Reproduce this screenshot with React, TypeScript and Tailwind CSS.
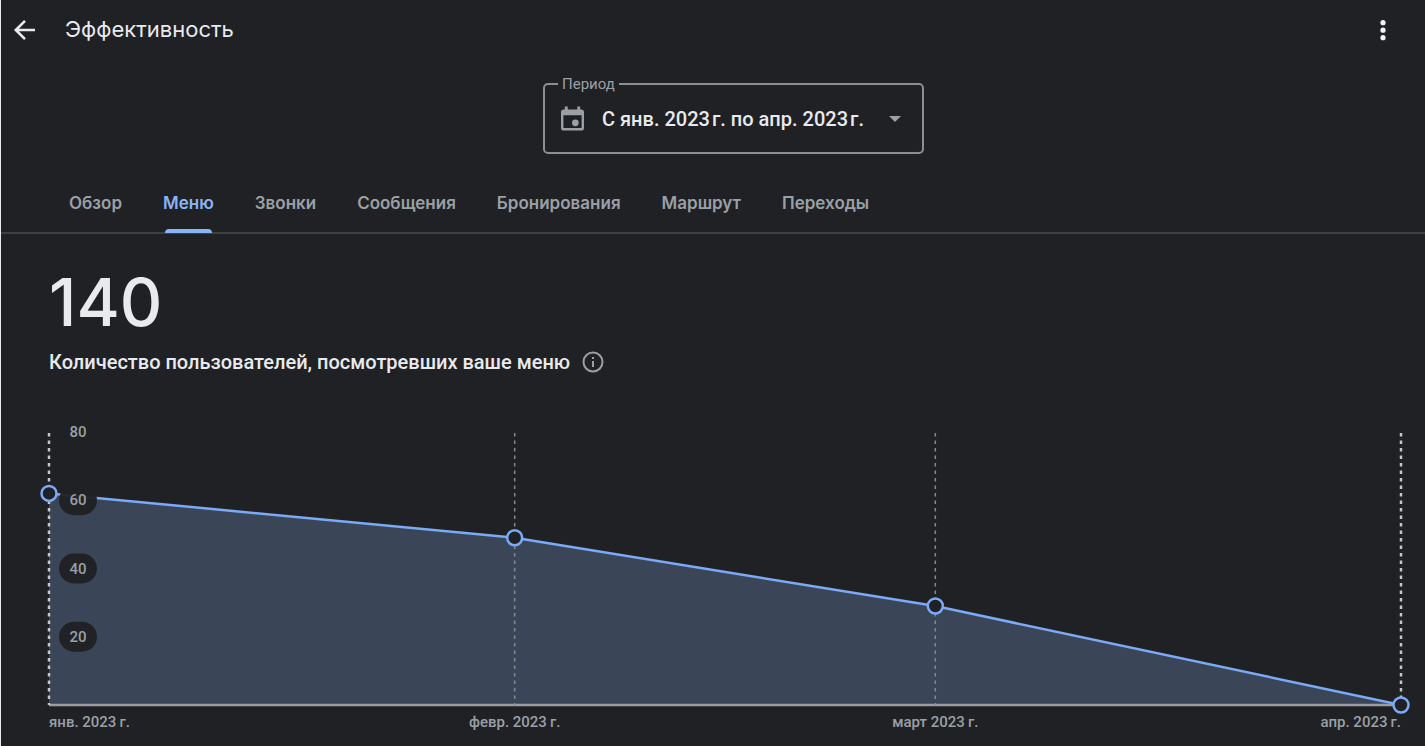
import { useState } from 'react'

type Point = { day: number; value: number; label: string; anchor: 'start' | 'middle' | 'end' }

const TABS = ['Обзор', 'Меню', 'Звонки', 'Сообщения', 'Бронирования', 'Маршрут', 'Переходы']

const PERIODS = ['С янв. 2023\u200Aг. по апр. 2023\u200Aг.']

const POINTS: Point[] = [
  { day: 0, value: 62, label: 'янв. 2023\u2009г.', anchor: 'start' },
  { day: 31, value: 49, label: 'февр. 2023\u2009г.', anchor: 'middle' },
  { day: 59, value: 29, label: 'март 2023\u2009г.', anchor: 'middle' },
  { day: 90, value: 0, label: 'апр. 2023\u2009г.', anchor: 'end' },
]

const TICKS = [80, 60, 40, 20]
const DAYS = 90
const MAX = 80
const PLOT_H = 273

const xOf = (day: number) => `${(day / DAYS) * 100}%`
const yOf = (value: number) => PLOT_H - (value / MAX) * PLOT_H

function Chart() {
  const line = POINTS.map((p) => `${p.day},${yOf(p.value)}`).join(' ')

  return (
    <svg
      role="img"
      aria-label="Количество пользователей по месяцам"
      className="block w-full h-[300px] overflow-visible font-['Roboto',sans-serif]"
    >
      {/* area + line stretch with the window */}
      <svg
        width="100%"
        height={PLOT_H}
        viewBox={`0 0 ${DAYS} ${PLOT_H}`}
        preserveAspectRatio="none"
        className="overflow-visible"
      >
        <polygon points={`0,${PLOT_H} ${line}`} fill="#3b4558" />
        <polyline
          points={line}
          fill="none"
          stroke="#7baaf7"
          strokeWidth="2.5"
          vectorEffect="non-scaling-stroke"
        />
      </svg>

      <line x1="0" x2="100%" y1={PLOT_H} y2={PLOT_H} stroke="#9a9da3" strokeWidth="2.5" />

      {POINTS.map((p) => {
        const edge = p.anchor !== 'middle'
        return (
          <line
            key={p.day}
            x1={xOf(p.day)}
            x2={xOf(p.day)}
            y1="1"
            y2={PLOT_H}
            stroke={edge ? '#c4c7ca' : '#84898f'}
            strokeWidth={edge ? 2.5 : 1.5}
            strokeDasharray="3.5 4"
          />
        )
      })}

      {TICKS.map((t) => (
        <g key={t}>
          <rect x="10" y={yOf(t) - 15} width="38" height="30" rx="15" fill="#202124" fillOpacity="0.96" />
          <text x="29" y={yOf(t) + 5} textAnchor="middle" className="fill-[#9aa0a6] text-[15px] font-medium">
            {t}
          </text>
        </g>
      ))}

      {POINTS.map((p) => (
        <g key={p.day}>
          <circle cx={xOf(p.day)} cy={yOf(p.value)} r="7.5" fill="#202124" stroke="#7baaf7" strokeWidth="2.5" />
          <text
            x={xOf(p.day)}
            y={PLOT_H + 22}
            textAnchor={p.anchor}
            className="fill-[#9aa0a6] text-[15px] font-medium"
          >
            {p.label}
          </text>
        </g>
      ))}
    </svg>
  )
}

export default function App() {
  const [tab, setTab] = useState('Меню')

  return (
    <div className="min-h-screen bg-[#202124] border-l border-[#e8eaed] text-[#e8eaed] font-['Roboto',sans-serif]">
      {/* Header */}
      <header className="flex items-center h-[60px] pl-3 pr-[30px]">
        <button type="button" aria-label="Назад" className="shrink-0">
          <svg width="24" height="24" viewBox="0 0 24 24" fill="none" stroke="currentColor" strokeWidth="2.6">
            <path d="M22 12H3.5M12 2.8 2.8 12l9.2 9.2" />
          </svg>
        </button>
        <h1 className="ml-7 pb-0.5 text-[22px] leading-7 font-['Inter',sans-serif]">Эффективность</h1>
        <button type="button" aria-label="Ещё" className="ml-auto">
          <svg width="24" height="24" viewBox="0 0 24 24" fill="#f1f3f4">
            <circle cx="12" cy="4.7" r="2.6" />
            <circle cx="12" cy="12.2" r="2.6" />
            <circle cx="12" cy="19.7" r="2.6" />
          </svg>
        </button>
      </header>

      {/* Period */}
      <div className="flex justify-center pt-[14px] pl-[41px]">
        <fieldset className="w-[381px] h-20 px-3 border-2 border-[#8b8f94] rounded-[5px]">
          <legend className="ml-px px-1 text-[15px] leading-5 text-[#9aa0a6]">
            <label htmlFor="period">Период</label>
          </legend>
          <div className="flex items-center h-[50px] pl-1">
            <svg width="23" height="26" viewBox="0 0 24 26" fill="#9aa0a6" className="shrink-0">
              <path
                fillRule="evenodd"
                d="M4 0h3v3h10V0h3v3h1a3 3 0 0 1 3 3v16a3 3 0 0 1-3 3H3a3 3 0 0 1-3-3V6a3 3 0 0 1 3-3h1zM2.500 9v12.500a1 1 0 0 0 1 1h17a1 1 0 0 0 1-1V9z"
              />
              <circle cx="15" cy="17" r="3.500" />
            </svg>
            <select
              id="period"
              className="grow min-w-0 ml-[18px] appearance-none bg-transparent text-xl leading-6 font-medium outline-none"
            >
              {PERIODS.map((p) => (
                <option key={p}>{p}</option>
              ))}
            </select>
            <svg width="12" height="6" viewBox="0 0 12 6" fill="#9aa0a6" className="shrink-0 mr-[9px]">
              <path d="M0 0h12L6 6z" />
            </svg>
          </div>
        </fieldset>
      </div>

      {/* Tabs */}
      <div role="tablist" className="flex gap-[41px] mt-5 pl-[68px] border-b-2 border-[#3c4043]">
        {TABS.map((t) => {
          const active = t === tab
          return (
            <button
              key={t}
              type="button"
              role="tab"
              aria-selected={active}
              onClick={() => setTab(t)}
              className={`relative h-[58px] text-[17px] leading-6 font-semibold font-['Inter',sans-serif] ${
                active ? 'text-[#8ab4f8]' : 'text-[#9aa0a6]'
              }`}
            >
              {t}
              {active && <span className="absolute inset-x-[2px] -bottom-px h-1 rounded-t-sm bg-[#8ab4f8]" />}
            </button>
          )
        })}
      </div>

      {/* Metric */}
      <main className="pl-12 pr-6">
        <p className="pt-[34px] text-[66px] leading-[68px] font-medium font-['Inter',sans-serif]">140</p>
        <div className="flex items-center gap-3 mt-[14px] mb-[58px]">
          <h2 className="text-xl leading-6 font-medium">Количество пользователей, посмотревших ваше меню</h2>
          <button type="button" aria-label="Подробнее">
            <svg width="22" height="22" viewBox="0 0 22 22" fill="none" stroke="#9aa0a6" strokeWidth="2">
              <circle cx="11" cy="11" r="9.500" />
              <path d="M11 10v6M11 6v2" />
            </svg>
          </button>
        </div>
        <Chart />
      </main>
    </div>
  )
}
